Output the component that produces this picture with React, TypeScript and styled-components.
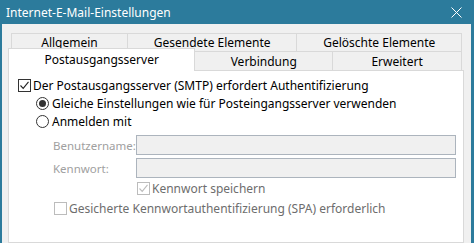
import React from 'react';
import styled, { createGlobalStyle } from 'styled-components';

const GlobalStyle = createGlobalStyle`
  html, body {
    margin: 0;
    padding: 0;
    background: #f0f0f0;
    overflow: hidden;
  }
  body {
    font-family: 'Noto Sans', 'Liberation Sans', sans-serif;
    font-size: 12px;
    color: #000000;
  }
`;

const teal = '#2c7b9c';

const Window = styled.div`
  width: 474px;
  height: 243px;
  box-sizing: border-box;
  display: flex;
  flex-direction: column;
  overflow: hidden;
`;

const TitleBar = styled.div`
  height: 24px;
  flex-shrink: 0;
  display: flex;
  align-items: center;
  justify-content: space-between;
  padding: 0 12px 0 6px;
  background: ${teal};
  color: #ffffff;
  font-size: 12px;
`;

const Body = styled.div`
  flex: 1;
  min-height: 0;
  min-width: 0;
  display: flex;
  flex-direction: column;
  box-sizing: border-box;
  border-left: 2px solid ${teal};
  border-right: 3px solid ${teal};
  padding: 9px 7px 0 6px;
  background: #f0f0f0;
  overflow: hidden;
`;

const TabRow = styled.div<{ $indent?: number }>`
  display: flex;
  flex-shrink: 0;
  height: ${(p) => (p.$indent ? 18 : 19)}px;
  margin: 0 2px 0 ${(p) => p.$indent || 0}px;
`;

const Tab = styled.div<{ $grow: number; $active?: boolean }>`
  flex: ${(p) => p.$grow} 1 0;
  min-width: 0;
  box-sizing: border-box;
  display: flex;
  align-items: center;
  justify-content: center;
  white-space: nowrap;
  border: 1px solid #d9d9d9;
  border-bottom: none;
  background: ${(p) => (p.$active ? '#ffffff' : '#f0f0f0')};
  & + & {
    border-left: none;
  }
  ${(p) =>
    p.$active &&
    `
    position: relative;
    z-index: 1;
    height: 23px;
    margin-top: -3px;
    padding-bottom: 1px;
  `}
`;

const Panel = styled.div`
  flex: 1;
  min-width: 0;
  box-sizing: border-box;
  background: #ffffff;
  border: 1px solid #d9d9d9;
  padding: 6px 7px 0 9px;
  display: flex;
  flex-direction: column;
  overflow: hidden;
`;

const OptionRow = styled.label<{ $indent?: number; $h?: number; $top?: number; $disabled?: boolean }>`
  display: flex;
  align-items: center;
  height: ${(p) => p.$h || 18}px;
  margin-left: ${(p) => p.$indent || 0}px;
  margin-top: ${(p) => p.$top || 0}px;
  color: ${(p) => (p.$disabled ? '#6d6d6d' : '#000000')};
  white-space: nowrap;
`;

const Box = styled.span<{ $disabled?: boolean }>`
  width: 13px;
  height: 13px;
  box-sizing: border-box;
  border: 1px solid ${(p) => (p.$disabled ? '#bcbcbc' : '#333333')};
  background: #ffffff;
  margin-right: 2px;
  display: flex;
  align-items: center;
  justify-content: center;
  flex-shrink: 0;
`;

const Radio = styled.span<{ $on?: boolean }>`
  width: 13px;
  height: 13px;
  box-sizing: border-box;
  border: 1px solid #333333;
  border-radius: 50%;
  background: #ffffff;
  margin-right: 3px;
  display: flex;
  align-items: center;
  justify-content: center;
  flex-shrink: 0;
  &::after {
    content: '';
    display: ${(p) => (p.$on ? 'block' : 'none')};
    width: 7px;
    height: 7px;
    border-radius: 50%;
    background: #333333;
  }
`;

const Fields = styled.div`
  display: grid;
  grid-template-columns: 83px minmax(0, 1fr);
  grid-auto-rows: 20px;
  row-gap: 3px;
  margin: 5px 0 0 35px;
  align-items: center;
`;

const FieldLabel = styled.span`
  color: #a0a0a0;
  font-size: 11.5px;
  white-space: nowrap;
  overflow: hidden;
`;

const Input = styled.div`
  height: 20px;
  box-sizing: border-box;
  border: 1px solid #acb4bd;
  background: #f0f0f0;
`;

const Check: React.FC<{ color: string }> = ({ color }) => (
  <svg width="11" height="11" viewBox="0 0 11 11">
    <path d="M1.5 5.5 L4.2 8.3 L9.5 1.8" fill="none" stroke={color} strokeWidth="1.1" />
  </svg>
);

const CloseIcon = () => (
  <svg width="11" height="11" viewBox="0 0 11 11">
    <path d="M0.5 0.5 L10.5 10.5 M10.5 0.5 L0.5 10.5" stroke="#ffffff" strokeWidth="1" />
  </svg>
);

const App: React.FC = () => {
  return (
    <>
      <GlobalStyle />
      <Window>
        <TitleBar>
          <span>Internet-E-Mail-Einstellungen</span>
          <CloseIcon />
        </TitleBar>
        <Body>
          <TabRow $indent={3}>
            <Tab $grow={116}>Allgemein</Tab>
            <Tab $grow={170}>Gesendete Elemente</Tab>
            <Tab $grow={165}>Gelöschte Elemente</Tab>
          </TabRow>
          <TabRow>
            <Tab $grow={187} $active>
              Postausgangsserver
            </Tab>
            <Tab $grow={138}>Verbindung</Tab>
            <Tab $grow={129}>Erweitert</Tab>
          </TabRow>
          <Panel>
            <OptionRow $h={17}>
              <Box>
                <Check color="#222222" />
              </Box>
              Der Postausgangsserver (SMTP) erfordert Authentifizierung
            </OptionRow>
            <OptionRow $indent={18}>
              <Radio $on />
              Gleiche Einstellungen wie für Posteingangsserver verwenden
            </OptionRow>
            <OptionRow $indent={18}>
              <Radio />
              Anmelden mit
            </OptionRow>
            <Fields>
              <FieldLabel>Benutzername:</FieldLabel>
              <Input />
              <FieldLabel>Kennwort:</FieldLabel>
              <Input />
            </Fields>
            <OptionRow $indent={119} $top={1} $disabled>
              <Box $disabled>
                <Check color="#bcbcbc" />
              </Box>
              Kennwort speichern
            </OptionRow>
            <OptionRow $indent={36} $top={2} $disabled>
              <Box $disabled />
              Gesicherte Kennwortauthentifizierung (SPA) erforderlich
            </OptionRow>
          </Panel>
        </Body>
      </Window>
    </>
  );
};

export default App;
